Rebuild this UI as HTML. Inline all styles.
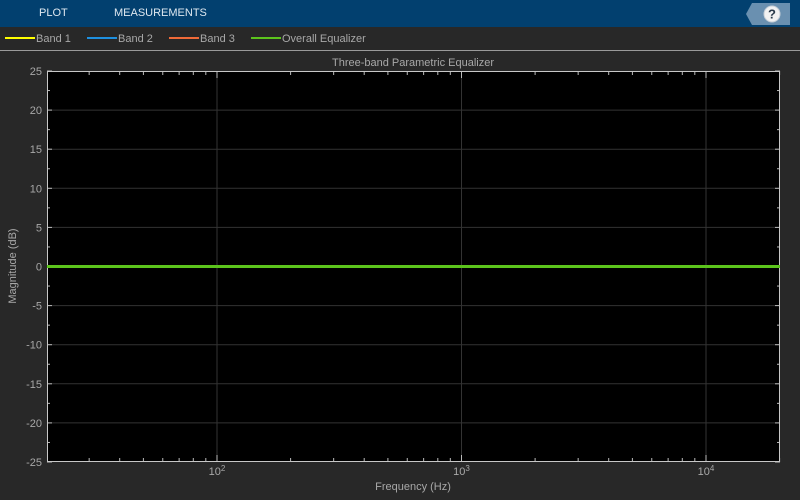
<!DOCTYPE html>
<html><head><style>
body{margin:0;width:800px;height:500px;background:#282828;overflow:hidden;font-family:"Liberation Sans",sans-serif;position:relative}
#top{position:absolute;left:0;top:0;width:800px;height:27px;background:#02406f}
.tab{position:absolute;top:7px;color:#dfe8f0;font-size:11px}
#leg{position:absolute;top:28px;left:0;width:800px;height:22px;background:#282828;border-bottom:1px solid #9a9a9a;font-size:11px;color:#a8a8a8}
.li{position:absolute;top:5px}
.li i{display:inline-block;width:30px;height:2px;vertical-align:3px;margin-right:1px}
</style></head><body>
<div id="top">
<span class="tab" style="left:39px">PLOT</span>
<span class="tab" style="left:114px">MEASUREMENTS</span>
<svg style="position:absolute;left:746px;top:3px" width="44" height="22"><polygon points="6,0 44,0 44,22 6,22 0,11" fill="#6a90b0"/><circle cx="26" cy="11" r="8" fill="#f2f2f2" stroke="#c8d0d8"/><text x="26" y="15.5" font-size="13" font-weight="bold" text-anchor="middle" fill="#2a3a4a" font-family="Liberation Sans">?</text></svg>
</div>
<div id="leg">
<span class="li" style="left:5px"><i style="background:#ffff00"></i>Band 1</span>
<span class="li" style="left:87px"><i style="background:#1e90e0"></i>Band 2</span>
<span class="li" style="left:169px"><i style="background:#f06a38"></i>Band 3</span>
<span class="li" style="left:251px"><i style="background:#5cc41c"></i>Overall Equalizer</span>
</div>
<svg id="p" style="position:absolute;left:0;top:0" width="800" height="500" font-family="Liberation Sans" font-size="11" fill="#a8a8a8"></svg>
<script>
var s='',L=47,R=780,T=71,B=462;
s+='<rect x="'+L+'" y="'+T+'" width="'+(R-L)+'" height="'+(B-T)+'" fill="#000"/>';
function X(f){return 217+244.5*(Math.log10(f)-2);}
for(var i=0;i<=10;i++){var y=T+i*(B-T)/10;var v=25-5*i;
 if(i>0&&i<10)s+='<line x1="'+L+'" x2="'+R+'" y1="'+y+'" y2="'+y+'" stroke="#333" />';
 s+='<line x1="'+L+'" x2="'+(L+5)+'" y1="'+y+'" y2="'+y+'" stroke="#bbb"/><line x1="'+(R-5)+'" x2="'+R+'" y1="'+y+'" y2="'+y+'" stroke="#bbb"/>';
 s+='<text x="42" y="'+(y+4)+'" text-anchor="end">'+(v<0?'-'+(-v):v)+'</text>';
 if(i<10){var y2=y+(B-T)/20;s+='<line x1="'+L+'" x2="'+(L+3)+'" y1="'+y2+'" y2="'+y2+'" stroke="#bbb"/><line x1="'+(R-3)+'" x2="'+R+'" y1="'+y2+'" y2="'+y2+'" stroke="#bbb"/>';}
}
for(var k=1;k<=4;k++)for(var m=1;m<10;m++){var f=m*Math.pow(10,k);var x=X(f);if(x<L||x>R)continue;
 var len=m==1?7:4;
 if(m==1){s+='<line x1="'+x+'" x2="'+x+'" y1="'+T+'" y2="'+B+'" stroke="#333"/>';
  s+='<text x="'+x+'" y="475" text-anchor="middle">10<tspan font-size="8" dy="-4">'+k+'</tspan></text>';}
 s+='<line x1="'+x+'" x2="'+x+'" y1="'+T+'" y2="'+(T+len)+'" stroke="#bbb"/><line x1="'+x+'" x2="'+x+'" y1="'+(B-len)+'" y2="'+B+'" stroke="#bbb"/>';
}
s+='<rect x="'+(L+.5)+'" y="'+(T+.5)+'" width="'+(R-L-1)+'" height="'+(B-T-1)+'" fill="none" stroke="#c8c8c8"/>';
s+='<line x1="'+L+'" x2="'+R+'" y1="266.5" y2="266.5" stroke="#5cc41c" stroke-width="3"/>';
s+='<text x="413" y="66" text-anchor="middle">Three-band Parametric Equalizer</text>';
s+='<text x="413" y="490" text-anchor="middle">Frequency (Hz)</text>';
s+='<text transform="translate(16,266) rotate(-90)" text-anchor="middle">Magnitude (dB)</text>';
document.getElementById('p').innerHTML=s;
</script>
</body></html>
